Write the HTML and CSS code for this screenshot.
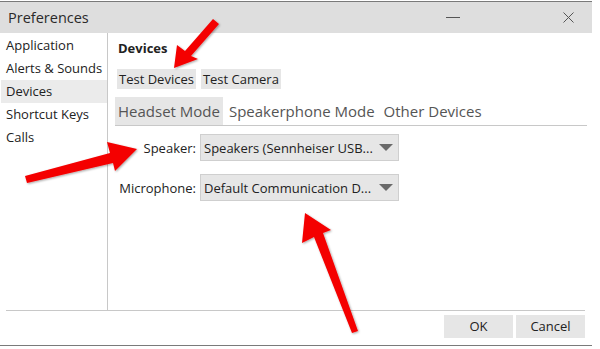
FILE: index.html
```html
<!DOCTYPE html>
<html lang="en">

<head>
    <meta charset="utf-8">
    <title>Preferences</title>
    <link rel="stylesheet" href="styles.css">
</head>

<body>

    <div class="window">
        <header class="titlebar">
            <span class="title">Preferences</span>
            <span class="minimize"></span>
            <svg class="close" width="11" height="11" viewBox="0 0 11 11">
                <path d="M0.5 0.5 L10.5 10.5 M10.5 0.5 L0.5 10.5" stroke="#555" stroke-width="1" fill="none" />
            </svg>
        </header>

        <div class="main">
            <nav class="sidebar">
                <div class="item">Application</div>
                <div class="item">Alerts &amp; Sounds</div>
                <div class="item valgt">Devices</div>
                <div class="item">Shortcut Keys</div>
                <div class="item">Calls</div>
            </nav>

            <section class="content">
                <h2>Devices</h2>
                <div class="knapper">
                    <button>Test Devices</button>
                    <button>Test Camera</button>
                </div>
                <div class="tabs">
                    <span class="tab aktiv">Headset Mode</span>
                    <span class="tab">Speakerphone Mode</span>
                    <span class="tab">Other Devices</span>
                </div>
                <div class="felter">
                    <label>Speaker:</label>
                    <div class="select"><span>Speakers (Sennheiser USB...</span><i class="pil"></i></div>
                    <label>Microphone:</label>
                    <div class="select"><span>Default Communication D...</span><i class="pil"></i></div>
                </div>
            </section>
        </div>

        <footer class="bund">
            <button>OK</button>
            <button>Cancel</button>
        </footer>

        <!-- red annotation arrows drawn over the dialog -->
        <svg class="pile" width="600" height="349" viewBox="0 0 600 349">
            <defs>
                <filter id="skygge" x="-20%" y="-20%" width="140%" height="140%">
                    <feDropShadow dx="1" dy="1" stdDeviation="1" flood-color="#000" flood-opacity="0.35" />
                </filter>
            </defs>
            <g fill="#f40000" filter="url(#skygge)">
                <polygon points="174,68 177,45 185,51 213,19 219,24 191,56 198,59" />
                <polygon points="137,149 107,142 110,153 25,176 27,183 113,163 115,171" />
                <polygon points="305,213 302,243 314,237 352,333 358,331 323,233 331,230" />
            </g>
        </svg>
    </div>

</body>

</html>
```

FILE: styles.css
```css
body {
    margin: 0;
    background-color: #ffffff;
    font-family: "Open Sans", "Noto Sans", sans-serif;
    color: #222;
}

.window {
    position: relative;
    width: 592px;
    height: 345px;
    border-top: 1px solid #7a7a7a;
    border-bottom: 1px solid #7a7a7a;
    box-sizing: border-box;
    margin-top: 1px;
    display: flex;
    flex-direction: column;
}

.titlebar {
    height: 31px;
    background-color: #dedede;
    display: flex;
    align-items: center;
    padding-left: 8px;
}

.title {
    font-size: 14.5px;
    color: #2a2a2a;
    flex: 1;
}

.minimize {
    width: 14px;
    height: 1px;
    background-color: #555;
    margin-right: 103px;
}

.close {
    margin-right: 18px;
}

.main {
    display: flex;
    height: 277px;
}

.sidebar {
    width: 107px;
    border-right: 1px solid #c8c8c8;
    padding-top: 1px;
    font-size: 13px;
}

.item {
    height: 23px;
    line-height: 23px;
    padding-left: 5px;
    margin-left: 1px;
}

.valgt {
    background-color: #ebebeb;
}

.content {
    flex: 1;
    padding-left: 9px;
    padding-right: 5px;
}

h2 {
    font-size: 13px;
    font-weight: bold;
    margin: 7px 0 0 1px;
    height: 16px;
    line-height: 16px;
}

.knapper {
    display: flex;
    gap: 5px;
    margin-top: 13px;
}

button {
    font-family: "Open Sans", "Noto Sans", sans-serif;
    font-size: 13px;
    color: #222;
    background-color: #e6e6e6;
    border: none;
    padding: 0 2px;
    height: 20px;
    line-height: 20px;
}

.tabs {
    display: flex;
    gap: 3px;
    margin-top: 8px;
    margin-left: -2px;
    border-bottom: 1px solid #c8c8c8;
}

.tab {
    font-size: 15px;
    color: #555;
    height: 28px;
    line-height: 28px;
    padding: 0 3px;
}

.aktiv {
    background-color: #e6e6e6;
}

.felter {
    display: grid;
    grid-template-columns: 79px 199px;
    column-gap: 4px;
    row-gap: 13px;
    margin-top: 8px;
    align-items: center;
}

label {
    font-size: 13px;
    text-align: right;
}

.select {
    height: 25px;
    border: 1px solid #cfcfcf;
    background-color: #e6e6e6;
    display: flex;
    align-items: center;
    padding: 0 4px 0 3px;
    font-size: 13px;
    white-space: nowrap;
    overflow: hidden;
}

.select span {
    flex: 1;
}

.pil {
    width: 0;
    height: 0;
    border-left: 7px solid transparent;
    border-right: 7px solid transparent;
    border-top: 7px solid #6a6a6a;
    margin-right: 1px;
}

.bund {
    margin-left: 6px;
    margin-right: 7px;
    border-top: 1px solid #c8c8c8;
    flex: 1;
    display: flex;
    justify-content: flex-end;
    align-items: flex-start;
    gap: 3px;
    padding-top: 4px;
}

.bund button {
    width: 69px;
    height: 23px;
    line-height: 23px;
    font-size: 13px;
    padding: 0;
}

.pile {
    position: absolute;
    left: 0;
    top: -2px;
    pointer-events: none;
}
```
